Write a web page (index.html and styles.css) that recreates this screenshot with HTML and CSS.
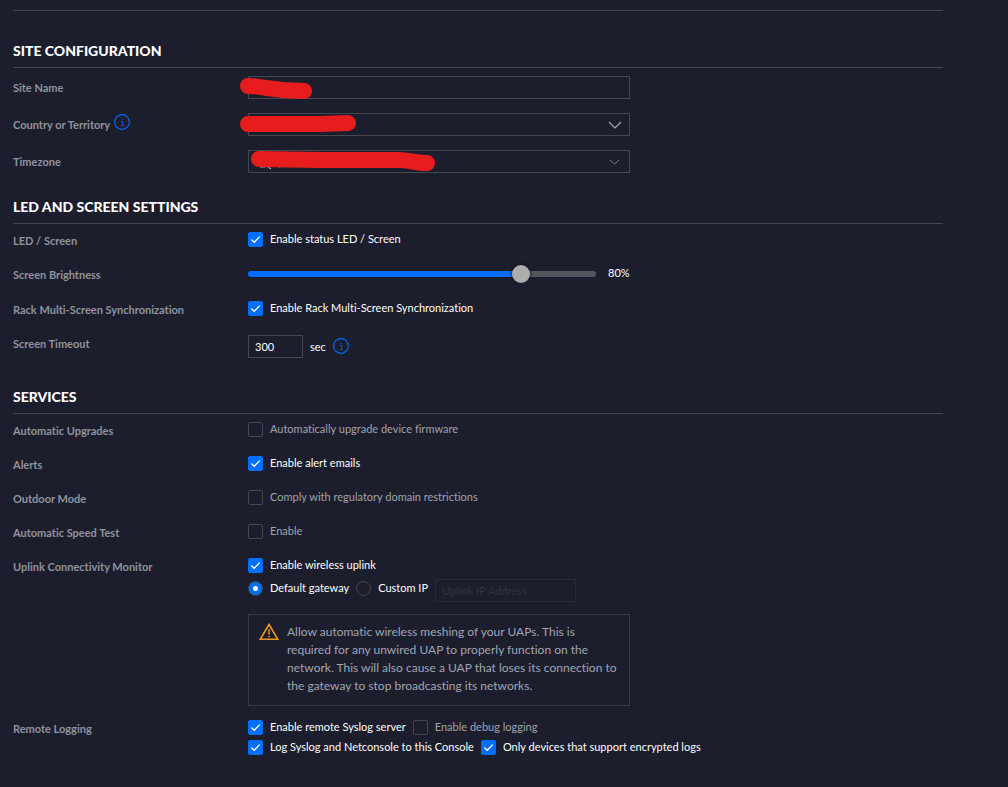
FILE: index.html
```html
<!DOCTYPE html>
<html lang="en">
<head>
<meta charset="utf-8">
<meta name="viewport" content="width=device-width, initial-scale=1">
<title>Site Configuration</title>
<link rel="stylesheet" href="styles.css">
</head>
<body>
<svg class="symbols" aria-hidden="true">
  <symbol id="tick" viewBox="0 0 15 15"><path d="M3.3 7.5 6.2 10.3 11.7 4.6" fill="none" stroke="#fff" stroke-width="1.3"/></symbol>
  <symbol id="info" viewBox="0 0 16 16"><circle cx="8" cy="8" r="7.4" fill="none" stroke="#006fff" stroke-width="1.1"/><path d="M7 7.5H8.5V11M7 11.5H10" fill="none" stroke="#0b56bd" stroke-width="1"/><rect x="7.5" y="5" width="1.2" height="1.2" fill="#0b56bd"/></symbol>
</svg>
<main class="page">
  <section class="section">
    <h2 class="section-title">Site Configuration</h2>
    <div class="row">
      <label class="row-label" for="site-name">Site Name</label>
      <div class="row-control">
        <div class="field">
          <input class="box" id="site-name" type="text">
          <svg class="redaction redaction-left" width="80" height="30" viewBox="240 73 80 30" aria-hidden="true"><path d="M248 86C264 86 271 91 304 91" fill="none" stroke="#e71d1d" stroke-width="16" stroke-linecap="round"/></svg>
        </div>
      </div>
    </div>
    <div class="row">
      <div class="row-label"><label for="country">Country or Territory</label><svg class="info" aria-hidden="true"><use href="#info"/></svg></div>
      <div class="row-control">
        <div class="field">
          <select class="box" id="country"><option></option></select>
          <svg class="chevron" width="14" height="8" viewBox="0 0 14 8" aria-hidden="true"><path d="M1 1 7 7 13 1" fill="none" stroke="#a9a9ad" stroke-width="1.2"/></svg>
          <svg class="redaction redaction-left" width="120" height="30" viewBox="240 110 120 30" aria-hidden="true"><path d="M248 124H320L348 123" fill="none" stroke="#e71d1d" stroke-width="16" stroke-linecap="round" stroke-linejoin="round"/></svg>
        </div>
      </div>
    </div>
    <div class="row">
      <label class="row-label" for="timezone">Timezone</label>
      <div class="row-control">
        <div class="field">
          <select class="box" id="timezone"><option></option></select>
          <svg class="chevron" width="14" height="8" viewBox="0 0 14 8" aria-hidden="true"><path d="M2 2 6.5 6 11 2" fill="none" stroke="#7d808a" stroke-width="1"/></svg>
          <svg class="redaction redaction-inset" width="190" height="30" viewBox="250 147 190 30" aria-hidden="true"><path d="M260 167H265M268 167 271 169M279 167H280" fill="none" stroke="#a5a6ad" stroke-width="1.2"/><path d="M259 159 320 160H398C410 160 416 163 427 163" fill="none" stroke="#e71d1d" stroke-width="16" stroke-linecap="round"/></svg>
        </div>
      </div>
    </div>
  </section>

  <section class="section">
    <h2 class="section-title">LED and Screen Settings</h2>
    <div class="row">
      <div class="row-label row-label-low">LED / Screen</div>
      <div class="row-control">
        <label class="option"><span class="check"><input type="checkbox" checked><svg><use href="#tick"/></svg></span><span>Enable status LED / Screen</span></label>
      </div>
    </div>
    <div class="row">
      <label class="row-label row-label-low" for="brightness">Screen Brightness</label>
      <div class="row-control">
        <div class="slider"><input class="range" id="brightness" type="range" min="0" max="100" value="80"><output class="slider-value" for="brightness">80%</output></div>
      </div>
    </div>
    <div class="row">
      <div class="row-label row-label-low">Rack Multi-Screen Synchronization</div>
      <div class="row-control">
        <label class="option"><span class="check"><input type="checkbox" checked><svg><use href="#tick"/></svg></span><span>Enable Rack Multi-Screen Synchronization</span></label>
      </div>
    </div>
    <div class="row">
      <label class="row-label row-label-low" for="timeout">Screen Timeout</label>
      <div class="row-control">
        <div class="timeout"><input class="box box-short" id="timeout" type="text" value="300"><span>sec</span><svg class="info" aria-hidden="true"><use href="#info"/></svg></div>
      </div>
    </div>
  </section>

  <section class="section section-spaced">
    <h2 class="section-title">Services</h2>
    <div class="row">
      <div class="row-label row-label-low">Automatic Upgrades</div>
      <div class="row-control">
        <label class="option"><span class="check"><input type="checkbox"><svg><use href="#tick"/></svg></span><span>Automatically upgrade device firmware</span></label>
      </div>
    </div>
    <div class="row">
      <div class="row-label row-label-low">Alerts</div>
      <div class="row-control">
        <label class="option"><span class="check"><input type="checkbox" checked><svg><use href="#tick"/></svg></span><span>Enable alert emails</span></label>
      </div>
    </div>
    <div class="row">
      <div class="row-label row-label-low">Outdoor Mode</div>
      <div class="row-control">
        <label class="option"><span class="check"><input type="checkbox"><svg><use href="#tick"/></svg></span><span>Comply with regulatory domain restrictions</span></label>
      </div>
    </div>
    <div class="row">
      <div class="row-label row-label-low">Automatic Speed Test</div>
      <div class="row-control">
        <label class="option"><span class="check"><input type="checkbox"><svg><use href="#tick"/></svg></span><span>Enable</span></label>
      </div>
    </div>
    <div class="row">
      <div class="row-label row-label-low">Uplink Connectivity Monitor</div>
      <div class="row-control">
        <label class="option"><span class="check"><input type="checkbox" checked><svg><use href="#tick"/></svg></span><span>Enable wireless uplink</span></label>
        <div class="gateway">
          <label class="option option-radio"><input class="radio" type="radio" name="gateway" checked><span>Default gateway</span></label>
          <label class="option option-radio"><input class="radio" type="radio" name="gateway"><span>Custom IP</span></label>
          <input class="box box-ip" type="text" placeholder="Uplink IP Address" aria-label="Uplink IP Address" disabled>
        </div>
        <div class="notice">
          <svg class="warning" width="20" height="18" viewBox="0 0 20 18" aria-hidden="true"><path d="M10 1.5 18.8 16.3H1.2Z" fill="none" stroke="#f09422" stroke-width="1.6"/><path d="M10 6.3V11.6M10 12.8V14.3" stroke="#f09422" stroke-width="1.5"/></svg>
          <p class="notice-text">Allow automatic wireless meshing of your UAPs. This is required for any unwired UAP to properly function on the network. This will also cause a UAP that loses its connection to the gateway to stop broadcasting its networks.</p>
        </div>
      </div>
    </div>
    <div class="row">
      <div class="row-label row-label-low">Remote Logging</div>
      <div class="row-control">
        <div class="option-line">
          <label class="option"><span class="check"><input type="checkbox" checked><svg><use href="#tick"/></svg></span><span>Enable remote Syslog server</span></label>
          <label class="option"><span class="check"><input type="checkbox"><svg><use href="#tick"/></svg></span><span>Enable debug logging</span></label>
        </div>
        <div class="option-line option-line-next">
          <label class="option"><span class="check"><input type="checkbox" checked><svg><use href="#tick"/></svg></span><span>Log Syslog and Netconsole to this Console</span></label>
          <label class="option"><span class="check"><input type="checkbox" checked><svg><use href="#tick"/></svg></span><span>Only devices that support encrypted logs</span></label>
        </div>
      </div>
    </div>
  </section>
</main>
</body>
</html>
```

FILE: styles.css
```css
* {
  box-sizing: border-box;
}

body {
  margin: 0;
  background: #1c1e2d;
  color: #fff;
  font: 11px/14px Lato, "Open Sans", sans-serif;
  font-variant-ligatures: none;
}

input,
select {
  margin: 0;
  font: inherit;
  color: inherit;
}

.symbols {
  position: absolute;
  width: 0;
  height: 0;
}

.page {
  margin: 10px 65px 24px 13px;
  padding-top: 12px;
  border-top: 1px solid #42464f;
}

.section {
  padding-top: 18px;
}

.section-spaced {
  padding-top: 23px;
}

.section-title {
  margin: 0;
  padding-bottom: 6px;
  border-bottom: 1px solid #42464f;
  font-size: 14px;
  font-weight: 900;
  line-height: 20px;
  text-transform: uppercase;
}

.row {
  display: grid;
  grid-template-columns: 235px 1fr;
  min-height: 34px;
  padding: 8px 0 6px;
}

.row-label {
  display: flex;
  gap: 4px;
  color: #8f939e;
  font-weight: 700;
  line-height: 23px;
}

.row-label-low {
  line-height: 18px;
}

.info {
  width: 16px;
  height: 16px;
  margin-top: 1px;
}

.field {
  position: relative;
  max-width: 382px;
}

.box {
  display: block;
  width: 100%;
  height: 23px;
  padding: 0 6px;
  border: 1px solid #42494f;
  border-radius: 0;
  background: transparent;
  appearance: none;
}

.box-short {
  width: 55px;
}

.box-ip {
  width: 141px;
}

.box-ip:disabled {
  border-color: #272a38;
}

.box-ip::placeholder {
  color: #303340;
}

.chevron {
  position: absolute;
  top: 8px;
  right: 8px;
  pointer-events: none;
}

.redaction {
  position: absolute;
  top: -3px;
  pointer-events: none;
}

.redaction-left {
  left: -8px;
}

.redaction-inset {
  left: 2px;
}

.option {
  display: flex;
  gap: 7px;
  width: max-content;
}

.option:has(input[type="checkbox"]:not(:checked)) {
  color: #a0a3ac;
}

.check {
  display: grid;
  width: 15px;
  height: 15px;
}

.check input,
.check svg {
  grid-area: 1 / 1;
  width: 15px;
  height: 15px;
}

.check input {
  border: 1px solid #42494f;
  border-radius: 2px;
  appearance: none;
}

.check input:checked {
  border-color: #006fff;
  background: #006fff;
}

.check svg {
  visibility: hidden;
  pointer-events: none;
}

.check input:checked + svg {
  visibility: visible;
}

.slider {
  display: flex;
  gap: 12px;
  height: 21px;
}

.range {
  width: 348px;
  height: 16px;
  background: transparent;
  appearance: none;
}

.range::-webkit-slider-runnable-track {
  height: 6px;
  border-radius: 3px;
  background: linear-gradient(to right, #006fff 79%, #50565e 79%);
}

.range::-webkit-slider-thumb {
  width: 18px;
  height: 18px;
  margin-top: -6px;
  border-radius: 50%;
  background: #adadad;
  box-shadow: 0 0 4px #12131d;
  appearance: none;
}

.timeout {
  display: flex;
  gap: 7px;
  line-height: 23px;
}

.timeout .info {
  margin-top: 3px;
}

.gateway {
  display: flex;
  gap: 7px;
  margin-top: 6px;
}

.option-radio {
  padding-top: 2px;
}

.radio {
  width: 15px;
  height: 15px;
  border: 1px solid #42494f;
  border-radius: 50%;
  appearance: none;
}

.radio:checked {
  background: radial-gradient(circle, #fff 2px, #006fff 3px);
}

.notice {
  display: flex;
  gap: 8px;
  max-width: 382px;
  margin-top: 12px;
  padding: 8px 10px 10px;
  border: 1px solid #363a48;
  color: #a0a5b1;
}

.warning {
  flex: none;
}

.notice-text {
  margin: 0;
  font-size: 12px;
  line-height: 18px;
}

.option-line {
  display: flex;
  gap: 7px;
}

.option-line-next {
  margin-top: 5px;
}
```
